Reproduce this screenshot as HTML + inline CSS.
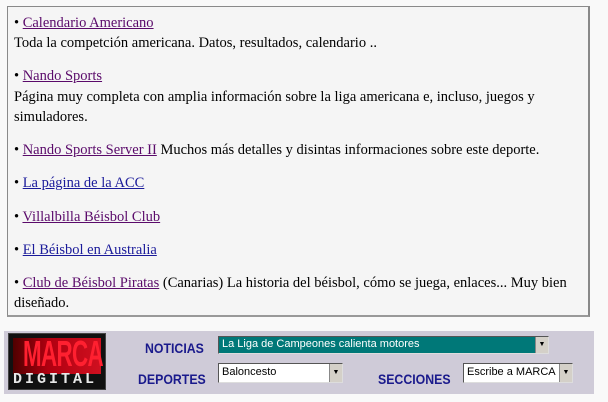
<!DOCTYPE html>
<html><head><meta charset="utf-8"><style>
body{margin:0;width:608px;height:402px;background:#f9f9f9;position:relative;overflow:hidden;font-family:"Liberation Serif",serif;}
#box{position:absolute;left:7px;top:6px;width:580px;height:308px;border:1px solid #8a8a8a;border-right:2px solid #888;border-bottom:2px solid #999;background:#f5f5f5;}
.p{position:absolute;left:14px;font-size:14.5px;line-height:20px;color:#000;white-space:nowrap}
a{color:#5a0a6a;text-decoration:underline}
a.b{color:#1a1a9a}
#bar{position:absolute;left:4px;top:331px;width:590px;height:63px;background:#cfcbd8;}
.lbl{position:absolute;font-family:"Liberation Sans",sans-serif;font-weight:bold;font-size:14px;color:#1a1a8c;transform:scaleX(0.88);transform-origin:left}
.sel{position:absolute;background:#fff;border:1px solid #555;border-right-color:#ddd;border-bottom-color:#ddd;font-family:"Liberation Sans",sans-serif;font-size:11px;line-height:17px;padding-left:3px;box-sizing:border-box}
.arr{position:absolute;right:0;top:0;width:13px;height:100%;background:#d4d0c8;border-left:1px solid #888;box-sizing:border-box;font-size:7px;text-align:center}
</style></head><body>
<div id="box"></div>
<div class="p" style="top:13px">• <a href="#">Calendario Americano</a></div>
<div class="p" style="top:33px">Toda la competción americana. Datos, resultados, calendario ..</div>
<div class="p" style="top:66px">• <a href="#">Nando Sports</a></div>
<div class="p" style="top:87px">Página muy completa con amplia información sobre la liga americana e, incluso, juegos y</div>
<div class="p" style="top:107px">simuladores.</div>
<div class="p" style="top:140px">• <a href="#">Nando Sports Server II</a> Muchos más detalles y disintas informaciones sobre este deporte.</div>
<div class="p" style="top:173px">• <a class="b" href="#">La página de la ACC</a></div>
<div class="p" style="top:207px">• <a href="#">Villalbilla Béisbol Club</a></div>
<div class="p" style="top:240px">• <a class="b" href="#">El Béisbol en Australia</a></div>
<div class="p" style="top:273px">• <a href="#">Club de Béisbol Piratas</a> (Canarias) La historia del béisbol, cómo se juega, enlaces... Muy bien</div>
<div class="p" style="top:293px">diseñado.</div>
<div id="bar"></div>
<div style="position:absolute;left:8px;top:333px;width:98px;height:57px;background:#111;border:1px solid #444;box-sizing:border-box;overflow:hidden">
<div style="position:absolute;left:4px;top:4px;width:88px;height:36px;background:linear-gradient(90deg,#500000,#b00010 40%,#d01020);"></div>
<div style="position:absolute;left:14px;top:0px;font:bold 36px/40px 'Liberation Sans',sans-serif;color:#ff2030;letter-spacing:-1px;transform:scaleX(0.62);transform-origin:left">MARCA</div>
<div style="position:absolute;left:4px;top:38px;font:bold 15px/16px 'Liberation Mono',monospace;color:#e8e8e8;letter-spacing:3px">DIGITAL</div>
</div>
<div class="lbl" style="left:145px;top:340px">NOTICIAS</div>
<div class="sel" style="left:218px;top:336px;width:331px;height:18px;background:#007878;color:#fff;line-height:15px">La Liga de Campeones calienta motores<div class="arr" style="color:#000">▼</div></div>
<div class="lbl" style="left:138px;top:371px">DEPORTES</div>
<div class="sel" style="left:218px;top:363px;width:125px;height:20px">Baloncesto<div class="arr">▼</div></div>
<div class="lbl" style="left:378px;top:371px">SECCIONES</div>
<div class="sel" style="left:463px;top:363px;width:110px;height:20px">Escribe a MARCA<div class="arr">▼</div></div>
</body></html>
